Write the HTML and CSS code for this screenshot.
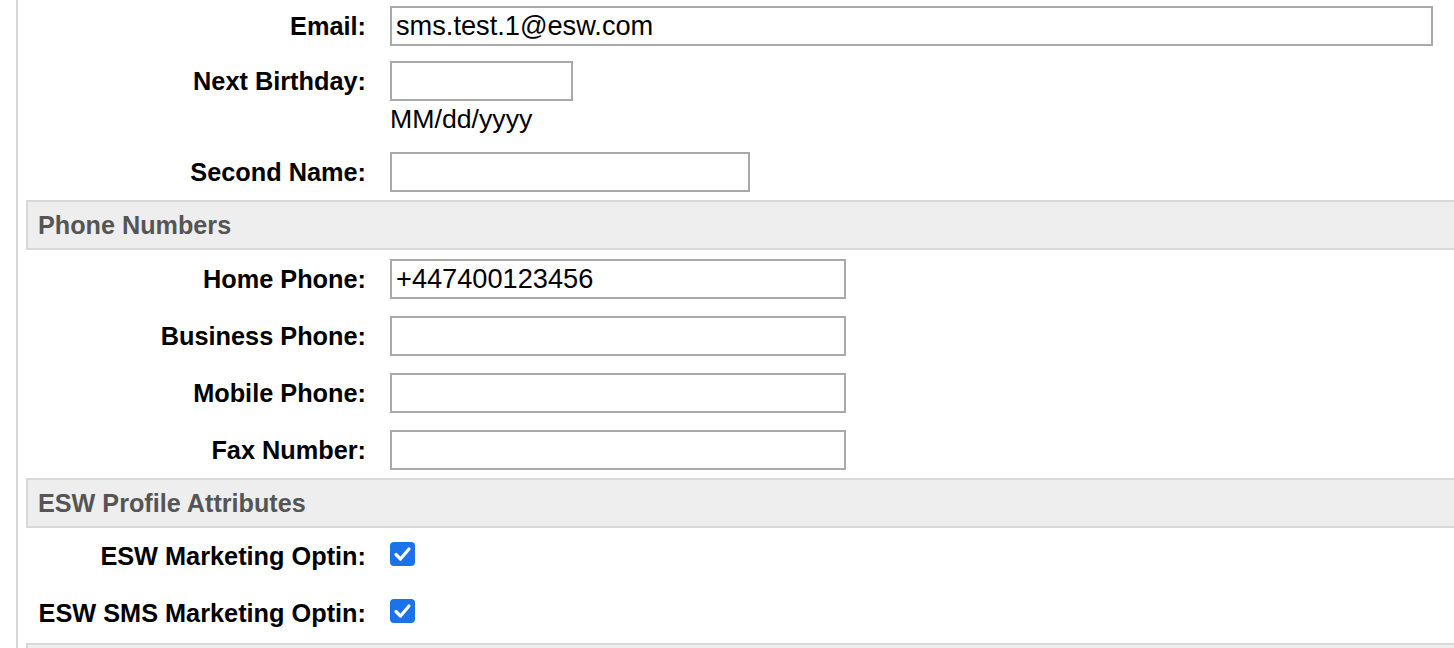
FILE: index.html
```html
<!DOCTYPE html>
<html lang="en">
<head>
<meta charset="utf-8">
<title>Profile</title>
<link rel="stylesheet" href="styles.css">
</head>
<body>
<div class="page">
  <div class="row row-first">
    <label class="label">Email:</label>
    <div class="field"><input class="input w-email" type="text" value="sms.test.1@esw.com"></div>
  </div>
  <div class="row row-birthday">
    <label class="label">Next Birthday:</label>
    <div class="field">
      <input class="input w-date" type="text" value="">
      <div class="hint">MM/dd/yyyy</div>
    </div>
  </div>
  <div class="row">
    <label class="label">Second Name:</label>
    <div class="field"><input class="input w-name" type="text" value=""></div>
  </div>

  <div class="section">Phone Numbers</div>
  <div class="row">
    <label class="label">Home Phone:</label>
    <div class="field"><input class="input w-phone" type="text" value="+447400123456"></div>
  </div>
  <div class="row">
    <label class="label">Business Phone:</label>
    <div class="field"><input class="input w-phone" type="text" value=""></div>
  </div>
  <div class="row">
    <label class="label">Mobile Phone:</label>
    <div class="field"><input class="input w-phone" type="text" value=""></div>
  </div>
  <div class="row">
    <label class="label">Fax Number:</label>
    <div class="field"><input class="input w-phone" type="text" value=""></div>
  </div>

  <div class="section">ESW Profile Attributes</div>
  <div class="row row-check">
    <label class="label">ESW Marketing Optin:</label>
    <div class="field">
      <span class="check"><svg viewBox="0 0 24 24" width="25" height="24"><path d="M5.5 12.5 L10 17 L18.5 7" fill="none" stroke="#fff" stroke-width="3.2" stroke-linecap="round" stroke-linejoin="round"/></svg></span>
    </div>
  </div>
  <div class="row row-check">
    <label class="label">ESW SMS Marketing Optin:</label>
    <div class="field">
      <span class="check"><svg viewBox="0 0 24 24" width="25" height="24"><path d="M5.5 12.5 L10 17 L18.5 7" fill="none" stroke="#fff" stroke-width="3.2" stroke-linecap="round" stroke-linejoin="round"/></svg></span>
    </div>
  </div>
  <div class="section section-end"></div>
</div>
</body>
</html>
```

FILE: styles.css
```css
html, body {
  margin: 0;
  padding: 0;
  background: #ffffff;
  overflow: hidden;
}

body {
  font-family: "Liberation Sans", Arial, Helvetica, sans-serif;
  color: #000;
  width: 1454px;
  height: 648px;
}

.page {
  margin-left: 16px;
  border-left: 2px solid #d6d6d6;
  padding-left: 8px;
  min-height: 648px;
  box-sizing: border-box;
}

.row {
  display: grid;
  grid-template-columns: 340px 1fr;
  column-gap: 24px;
  align-items: start;
  padding: 9px 0 8px;
}

.row-first {
  padding-top: 6px;
}

.row-birthday {
  padding-top: 7px;
  padding-bottom: 10px;
}

.label {
  text-align: right;
  font-weight: bold;
  font-size: 25.3px;
  line-height: 40px;
  white-space: nowrap;
  color: #000;
}

.field {
  display: flex;
  flex-direction: column;
  align-items: flex-start;
}

.input {
  box-sizing: border-box;
  height: 40px;
  margin: 0;
  border: 2px solid #a9a9a9;
  border-radius: 0;
  padding: 0 4px;
  font-family: "Liberation Sans", Arial, Helvetica, sans-serif;
  font-size: 27.2px;
  color: #000;
  background: #fff;
  outline: none;
}

.w-email { width: 1043px; }
.w-date { width: 183px; }
.w-name { width: 360px; }
.w-phone { width: 456px; }

.hint {
  margin-top: 4px;
  font-size: 26.7px;
  line-height: 28px;
  color: #000;
}

.section {
  box-sizing: border-box;
  height: 50px;
  background: #eeeeee;
  border-top: 2px solid #d8d8d8;
  border-bottom: 2px solid #d8d8d8;
  border-left: 2px solid #d8d8d8;
  padding-left: 10px;
  font-weight: bold;
  font-size: 25.2px;
  line-height: 46px;
  color: #555555;
}

.row-check {
  padding: 0;
  height: 57px;
  align-items: center;
}

.row-check .label {
  line-height: 57px;
}

.check {
  display: block;
  width: 25px;
  height: 24px;
  border-radius: 4px;
  background: #1a73e8;
  margin-bottom: 6px;
}

.check svg {
  display: block;
}

.section-end {
  margin-top: 1px;
}
```
